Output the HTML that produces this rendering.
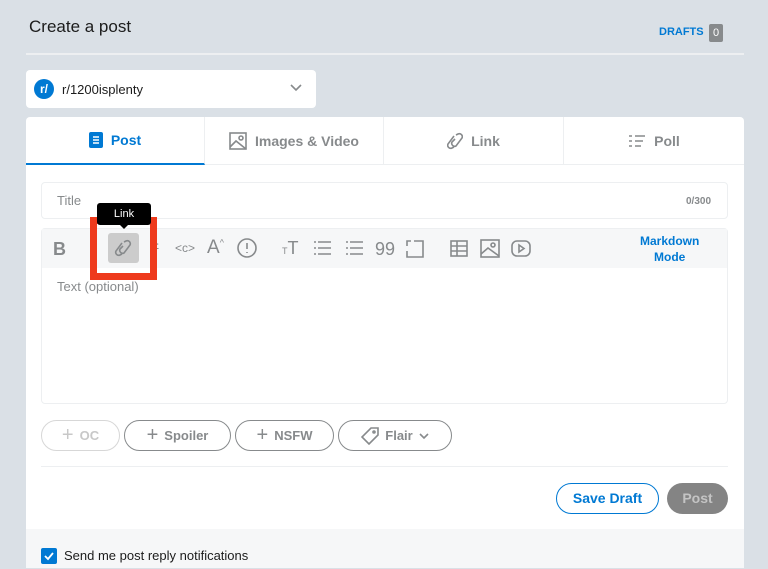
<!DOCTYPE html>
<html><head><style>
*{margin:0;padding:0;box-sizing:border-box}
body{width:768px;height:568px;overflow:hidden;background:#dae0e6;font-family:"Liberation Sans",sans-serif;position:relative;color:#1c1c1c}
.a{position:absolute}
.ic{stroke:#878a8c;fill:none;stroke-width:1.6}
.tab{position:absolute;top:117px;height:48px;display:flex;align-items:center;justify-content:center;font-size:14px;font-weight:bold;color:#878a8c;gap:8px;border-right:1px solid #edeff1;border-bottom:1px solid #edeff1}
.pill{position:absolute;top:420px;height:31px;border:1px solid #878a8c;border-radius:16px;display:flex;align-items:center;justify-content:center;font-size:13px;font-weight:bold;color:#878a8c;gap:6px}
</style></head><body>
<div class="a" style="left:29px;top:17px;font-size:17px;color:#1c1c1c">Create a post</div>
<div class="a" style="left:659px;top:26px;font-size:11px;font-weight:bold;color:#0079d3">DRAFTS</div>
<div class="a" style="left:709px;top:24px;width:14px;height:18px;background:#878a8c;color:#fff;font-size:11px;text-align:center;line-height:18px;border-radius:2px">0</div>
<div class="a" style="left:26px;top:53px;width:718px;height:2px;background:#edeff1"></div>
<div class="a" style="left:26px;top:70px;width:290px;height:38px;background:#fff;border-radius:4px"></div>
<div class="a" style="left:34px;top:79px;width:20px;height:20px;border-radius:50%;background:#0079d3;color:#fff;font-size:12px;font-weight:bold;text-align:center;line-height:20px">r/</div>
<div class="a" style="left:62px;top:82px;font-size:13px">r/1200isplenty</div>
<svg class="a" style="left:290px;top:83px" width="12" height="10"><path d="M1 2l5 5 5-5" class="ic" stroke-width="1.2"/></svg>
<div class="a" style="left:26px;top:117px;width:718px;height:451px;background:#fff;border-radius:4px 4px 0 0"></div>
<div class="tab" style="left:26px;width:179px;color:#0079d3;border-bottom:2px solid #0079d3"><svg width="14" height="16"><rect width="14" height="16" rx="2" fill="#0079d3"/><path d="M4 5h6M4 8h6M4 11h6" stroke="#fff" stroke-width="1.4"/></svg>Post</div>
<div class="tab" style="left:205px;width:179px"><svg width="18" height="18"><rect x="1" y="1" width="16" height="16" class="ic"/><path d="M1 15l6-6 10 8" class="ic"/><circle cx="12" cy="6" r="2" class="ic"/></svg>Images &amp; Video</div>
<div class="tab" style="left:384px;width:180px"><svg width="16" height="18"><path d="M9 3l2-1a3 3 0 014 4L9 14a3 3 0 01-4-4l3-3M7 15l-2 1a3 3 0 01-4-4l6-8" class="ic"/></svg>Link</div>
<div class="tab" style="left:564px;width:180px;border-right:0"><svg width="18" height="16"><path d="M7 3h10M7 8h8M7 13h6M1 3h3M1 8h3M1 13h3" class="ic" stroke-width="1.3"/></svg>Poll</div>
<div class="a" style="left:41px;top:182px;width:687px;height:37px;border:1px solid #edeff1;border-radius:4px"></div>
<div class="a" style="left:57px;top:193px;font-size:13px;color:#878a8c">Title</div>
<div class="a" style="left:686px;top:196px;font-size:10px;font-weight:bold;color:#878a8c">0/300</div>
<div class="a" style="left:41px;top:228px;width:687px;height:176px;border:1px solid #edeff1;border-radius:4px"></div>
<div class="a" style="left:42px;top:229px;width:685px;height:39px;background:#f6f7f8"></div>
<div class="a" style="left:53px;top:239px;font-size:18px;font-weight:bold;color:#878a8c">B</div>
<div class="a" style="left:108px;top:233px;width:31px;height:30px;background:#ccc;border-radius:3px"></div>
<svg class="a" style="left:114px;top:238px" width="18" height="20"><path d="M10 4l2-1a3 3 0 014 4L10 15a3 3 0 01-4-4l3-3M8 16l-2 1a3 3 0 01-4-4l6-8" class="ic"/></svg>
<div class="a" style="left:150px;top:240px;font-size:14px;color:#878a8c;text-decoration:line-through">T</div>
<div class="a" style="left:175px;top:241px;font-size:12px;color:#878a8c">&lt;c&gt;</div>
<div class="a" style="left:207px;top:237px;font-size:19px;color:#878a8c">A<sup style="font-size:9px">^</sup></div>
<svg class="a" style="left:236px;top:237px" width="22" height="22"><circle cx="11" cy="11" r="9" class="ic"/><path d="M11 6v6M11 15v1" class="ic"/></svg>
<div class="a" style="left:282px;top:238px;font-size:18px;color:#878a8c"><span style="font-size:9px">T</span>T</div>
<svg class="a" style="left:313px;top:240px" width="18" height="16"><path d="M5 2h13M5 8h13M5 14h13M1 2h2M1 8h2M1 14h2" class="ic"/></svg>
<svg class="a" style="left:345px;top:240px" width="18" height="16"><path d="M5 2h13M5 8h13M5 14h13M1 2h2M1 8h2M1 14h2" class="ic"/></svg>
<div class="a" style="left:375px;top:239px;font-size:18px;color:#878a8c">99</div>
<svg class="a" style="left:405px;top:239px" width="20" height="20"><path d="M6 2H2v5M2 12v6h16V2h-9" class="ic"/></svg>
<svg class="a" style="left:450px;top:240px" width="18" height="17"><rect x="1" y="1" width="16" height="15" class="ic"/><path d="M1 6h16M1 11h16M7 1v15" class="ic"/></svg>
<svg class="a" style="left:480px;top:239px" width="20" height="19"><rect x="1" y="1" width="18" height="17" class="ic"/><path d="M1 15l7-6 11 8" class="ic"/><circle cx="13" cy="6" r="2" class="ic"/></svg>
<svg class="a" style="left:511px;top:239px" width="20" height="19"><rect x="1" y="2" width="18" height="15" rx="5" class="ic"/><path d="M8 6v7l5-3.5z" class="ic"/></svg>
<div class="a" style="left:640px;top:233px;font-size:12px;font-weight:bold;color:#0079d3;text-align:center;line-height:16px">Markdown<br>Mode</div>
<div class="a" style="left:57px;top:279px;font-size:13px;color:#878a8c">Text (optional)</div>
<div class="a" style="left:90px;top:217px;width:67px;height:63px;border:7px solid #ee3a1c"></div>
<div class="a" style="left:97px;top:203px;width:54px;height:22px;background:#000;color:#fff;font-size:11px;text-align:center;line-height:22px;border-radius:3px">Link</div>
<div class="a" style="left:119px;top:224px;width:0;height:0;border:5px solid transparent;border-top-color:#000"></div>
<div class="pill" style="left:41px;width:79px;border-color:#d7d7d7;color:#c8c8c8"><span style="font-size:20px;font-weight:normal">+</span>OC</div>
<div class="pill" style="left:124px;width:107px"><span style="font-size:20px;font-weight:normal">+</span>Spoiler</div>
<div class="pill" style="left:235px;width:99px"><span style="font-size:20px;font-weight:normal">+</span>NSFW</div>
<div class="pill" style="left:338px;width:114px"><svg width="18" height="18"><path d="M10 1h7v7L8 17 1 10z" class="ic"/><circle cx="13" cy="5" r="1" class="ic"/></svg>Flair <svg width="10" height="8"><path d="M1 2l4 4 4-4" class="ic" stroke-width="1.2"/></svg></div>
<div class="a" style="left:41px;top:466px;width:687px;height:1px;background:#edeff1"></div>
<div class="a" style="left:556px;top:483px;width:103px;height:31px;border:1px solid #0079d3;border-radius:16px;color:#0079d3;font-size:14px;font-weight:bold;text-align:center;line-height:29px">Save Draft</div>
<div class="a" style="left:667px;top:483px;width:61px;height:31px;background:#848484;border-radius:16px;color:#c4c4c4;font-size:14px;font-weight:bold;text-align:center;line-height:31px">Post</div>
<div class="a" style="left:26px;top:529px;width:718px;height:39px;background:#f6f7f8"></div>
<div class="a" style="left:41px;top:548px;width:16px;height:16px;background:#0079d3;border-radius:2px"><svg width="16" height="16"><path d="M4 8l3 3 5-6" stroke="#fff" stroke-width="1.8" fill="none"/></svg></div>
<div class="a" style="left:64px;top:548px;font-size:13px">Send me post reply notifications</div>
</body></html>
